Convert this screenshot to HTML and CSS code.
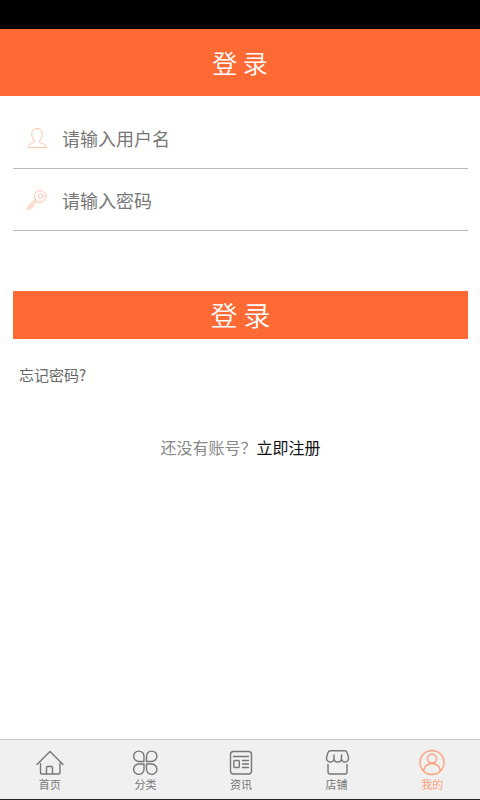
FILE: index.html
```html
<!DOCTYPE html>
<html lang="zh-CN">
<head>
<meta charset="utf-8">
<meta name="viewport" content="width=device-width, initial-scale=1">
<title>登录</title>
<link rel="stylesheet" href="styles.css">
</head>
<body>
<div class="status-bar"></div>
<header class="header"><h1 class="title">登 录</h1></header>
<main class="main">
  <form class="form">
    <div class="field">
      <label class="field-icon" for="username" aria-label="用户名">
        <svg width="20" height="22" viewBox="0 0 20 22"><path d="M7.3 14C4.8 11 4.5 7.500 5 4.800C5.500 2.500 7.500 1.500 10 1.500C12.500 1.500 14.500 2.500 15 4.800C15.500 7.500 15 11 12.600 14C12.300 16 13.500 16.200 16 16.800C18.500 17.400 19 18.300 19 20.500H1C1 18.300 1.500 17.400 4 16.800C6.500 16.200 7.700 16 7.300 14Z"/></svg>
      </label>
      <input class="input" id="username" type="text" placeholder="请输入用户名">
    </div>
    <div class="field">
      <label class="field-icon" for="password" aria-label="密码">
        <svg width="20" height="22" viewBox="0 0 20 22"><circle cx="13.200" cy="7.500" r="5.800"/><circle cx="13.500" cy="7.200" r="2.300"/><path d="M8.300 10.500L.8 18L.6 20.300L3.300 20.200L3.700 18.300L5.600 18L5.800 16.200L7.500 15.800L10.500 12.700M2 18.500L9 11.500"/></svg>
      </label>
      <input class="input" id="password" type="password" placeholder="请输入密码">
    </div>
    <button class="submit" type="submit">登 录</button>
  </form>
  <a class="forgot" href="#forgot">忘记密码?</a>
  <p class="register">还没有账号？<a class="register-link" href="#register">立即注册</a></p>
</main>
<nav class="tabs">
  <a class="tab" href="#home">
    <svg width="28" height="28" viewBox="0 0 28 28"><path d="M1 15.500L14 2.500L27 15.500M4.500 14.500V23.500Q4.500 25 6 25H22.500Q24 25 24 23.500V14.500M10.500 25V18.500Q10.500 17.500 11.500 17.500H15.500Q16.500 17.500 16.500 18.500V25"/></svg>
    <span>首页</span>
  </a>
  <a class="tab" href="#category">
    <svg width="28" height="28" viewBox="0 0 28 28"><path d="M13 12.500H7.500A5.200 5.200 0 1 1 13 7.200ZM15.500 12.500V7.200A5.200 5.200 0 1 1 21 12.500ZM13 15V20A5.200 5.200 0 1 1 7.500 15ZM15.500 15H21A5.200 5.200 0 1 1 15.500 20Z"/></svg>
    <span>分类</span>
  </a>
  <a class="tab" href="#news">
    <svg width="28" height="28" viewBox="0 0 28 28"><rect x="3.500" y="2.500" width="21" height="22.500" rx="3"/><path d="M6.500 7.500H21.500M15.500 11.500H21.500M15.500 15H21.500M15.500 18.500H21.500"/><rect x="6.800" y="11.500" width="5.500" height="7" rx="1"/></svg>
    <span>资讯</span>
  </a>
  <a class="tab" href="#shop">
    <svg width="28" height="28" viewBox="0 0 28 28"><path d="M7.500 1.800H21.500Q23.500 1.800 24 3.500L25.500 8.500C26 14.400 18.500 14.400 18.500 9.500V6M18.500 9.500C18.500 14.200 11 14.200 11 9.500V6M11 9.500C11 14.400 3 14.400 3.500 8.500L5 3.500Q5.500 1.800 7.500 1.800M5 15.500V23Q5 25 7 25H22Q24 25 24 23V15.500"/></svg>
    <span>店铺</span>
  </a>
  <a class="tab tab-active" href="#me" aria-current="page">
    <svg width="28" height="28" viewBox="0 0 28 28"><circle cx="14" cy="13.500" r="12"/><circle cx="14" cy="9.500" r="4.500"/><path d="M5.500 22C6.500 17 9.500 14.500 14 14.500C18.500 14.500 21.500 17 22.500 22"/></svg>
    <span>我的</span>
  </a>
</nav>
</body>
</html>
```
FILE: styles.css
```css
* {
  box-sizing: border-box;
}

body {
  margin: 0;
  min-height: 100vh;
  display: flex;
  flex-direction: column;
  background: #fff;
  color: #777;
  font-family: "Noto Sans CJK SC", sans-serif;
}

a {
  color: inherit;
  text-decoration: none;
}

svg {
  display: block;
  fill: none;
  stroke: currentColor;
  stroke-linecap: round;
  stroke-linejoin: round;
}

.status-bar {
  height: 29px;
  background: #000;
}

.header {
  padding: 15px 0 16px;
  background: #ff6933;
  color: #fff;
  text-align: center;
}

.title {
  margin: 0;
  font-size: 25px;
  font-weight: 350;
  line-height: 36px;
}

.main {
  flex: 1;
  padding: 11px 12px 0 13px;
}

.field {
  display: flex;
  align-items: center;
  padding: 15px 0 15px 14px;
  border-bottom: 1px solid #bbb;
}

.field-icon {
  margin-right: 15px;
  color: #ffc4ab;
}

.input {
  flex: 1;
  min-width: 0;
  height: 31px;
  padding: 0;
  border: 0;
  outline: 0;
  background: transparent;
  color: #333;
  font-family: inherit;
  font-size: 18px;
}

.input::placeholder {
  color: #777;
  opacity: 1;
}

.submit {
  display: block;
  width: 100%;
  margin-top: 60px;
  padding: 4px 0;
  border: 0;
  background: #ff6933;
  color: #fff;
  font-family: inherit;
  font-size: 27px;
  font-weight: 350;
  line-height: 40px;
}

.forgot {
  display: inline-block;
  margin: 25px 0 0 6px;
  color: #666;
  font-size: 15px;
  line-height: 22px;
}

.register {
  margin: 49px 0 0;
  color: #888;
  font-size: 16px;
  line-height: 24px;
  text-align: center;
}

.register-link {
  color: #111;
}

.tabs {
  display: flex;
  padding: 9px 0 8px 2px;
  border-top: 1px solid #c4c4c4;
  border-bottom: 1px solid #222;
  background: #f0f0f0;
}

.tab {
  flex: 1;
  display: flex;
  flex-direction: column;
  align-items: center;
  color: #777;
  font-size: 11px;
  line-height: 14px;
}

.tab svg {
  stroke-width: 1.4;
}

.tab-active {
  color: #ff9f7d;
}
```
